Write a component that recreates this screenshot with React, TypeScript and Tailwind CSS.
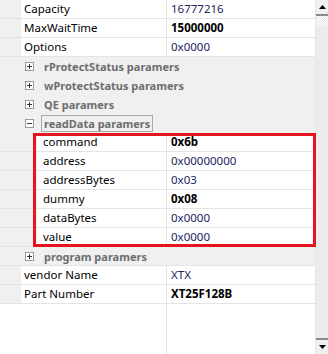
type Prop = { name: string; value: string; bold?: boolean };

function PropRow({ p, indent }: { p: Prop; indent?: boolean }) {
  return (
    <div className="flex h-[19px] border-b border-[#e4e4e4]">
      <div className={indent ? "w-[37px] shrink-0 bg-[#f0f0f0]" : "w-[21px] shrink-0 bg-[#f0f0f0]"} />
      <div className="flex flex-1 items-center border-r border-[#e4e4e4] bg-white pl-[3px] text-black">
        {indent ? <span className="pl-[3px]">{p.name}</span> : p.name}
      </div>
      <div
        className={
          "flex w-[148px] shrink-0 items-center bg-white pl-[4px] " +
          (p.bold ? "font-bold text-black" : "text-[#1b2460]")
        }
      >
        {p.value}
      </div>
    </div>
  );
}

function Category({ title, open, focus, line }: { title: string; open?: boolean; focus?: boolean; line?: boolean }) {
  return (
    <div className={"flex h-[19px] items-center border-b bg-[#f0f0f0] " + (line ? "border-[#e4e4e4]" : "border-[#f0f0f0]")}>
      <div className="ml-[25px] flex h-[9px] w-[9px] items-center justify-center border border-[#9a9a9a] bg-white">
        <svg width="7" height="7" viewBox="0 0 7 7">
          <rect x="1" y="3" width="5" height="1" fill="#333" />
          {!open && <rect x="3" y="1" width="1" height="5" fill="#333" />}
        </svg>
      </div>
      <div
        className={
          "ml-[7px] flex h-[17px] items-center px-[2px] text-[11px] font-bold text-[#6d6d6d] " +
          (focus ? "border border-[#a9a9a9]" : "border border-transparent")
        }
      >
        {title}
      </div>
    </div>
  );
}

export default function App() {
  const top: Prop[] = [
    { name: "Capacity", value: "16777216" },
    { name: "MaxWaitTime", value: "15000000", bold: true },
    { name: "Options", value: "0x0000" },
  ];
  const readData: Prop[] = [
    { name: "command", value: "0x6b", bold: true },
    { name: "address", value: "0x00000000" },
    { name: "addressBytes", value: "0x03" },
    { name: "dummy", value: "0x08", bold: true },
    { name: "dataBytes", value: "0x0000" },
    { name: "value", value: "0x0000" },
  ];
  const bottom: Prop[] = [
    { name: "vendor Name", value: "XTX" },
    { name: "Part Number", value: "XT25F128B", bold: true },
  ];

  return (
    <div
      className="relative flex h-[354px] w-[328px] overflow-hidden bg-white text-[11.5px] leading-none"
      style={{ fontFamily: '"Noto Sans", "Open Sans", sans-serif' }}
    >
      <div className="flex w-[315px] flex-col">
        {top.map((p) => (
          <PropRow key={p.name} p={p} />
        ))}
        <Category title="rProtectStatus paramers" />
        <Category title="wProtectStatus paramers" />
        <Category title="QE paramers" />
        <Category title="readData paramers" open focus />
        {readData.map((p) => (
          <PropRow key={p.name} p={p} indent />
        ))}
        <Category title="program paramers" line />
        {bottom.map((p) => (
          <PropRow key={p.name} p={p} />
        ))}
        <div className="flex flex-1">
          <div className="w-[167px] border-r border-[#e4e4e4]" />
        </div>
      </div>

      {/* scrollbar */}
      <div className="flex w-[13px] flex-col border-l border-[#e6e6e6] bg-[#f4f4f4]">
        <div className="flex h-[16px] items-center justify-center border-b-2 border-[#8a8a8a] bg-[#f0f0f0]">
          <svg width="7" height="4" viewBox="0 0 7 4">
            <path d="M0 4 L3.5 0 L7 4 Z" fill="#000" />
          </svg>
        </div>
        <div className="h-[10px] bg-[repeating-conic-gradient(#ffffff_0_25%,#e8e8e8_0_50%)] bg-[length:2px_2px]" />
        <div className="flex-1 bg-[#ececec]" />
        <div className="flex h-[16px] items-center justify-center border-t-2 border-[#8a8a8a] bg-[#f0f0f0]">
          <svg width="7" height="4" viewBox="0 0 7 4">
            <path d="M0 0 L7 0 L3.5 4 Z" fill="#000" />
          </svg>
        </div>
      </div>

      {/* red highlight */}
      <div className="absolute left-[33px] top-[133px] h-[114px] w-[283px] border-[3px] border-[#e5141f]" />
    </div>
  );
}
